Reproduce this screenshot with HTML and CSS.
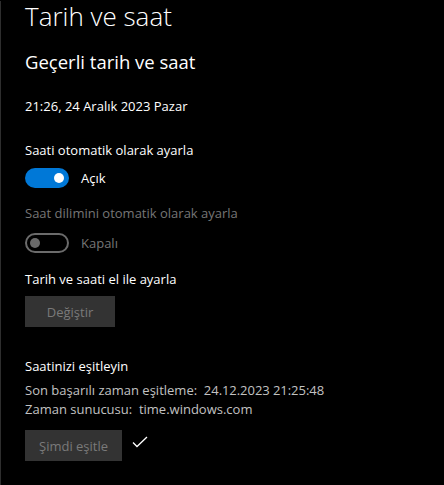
FILE: index.html
```html
<!DOCTYPE html>
<html lang="tr">
<head>
<meta charset="utf-8">
<title>Tarih ve saat</title>
<link rel="stylesheet" href="styles.css">
</head>
<body>
<div class="page">
  <h1 class="title">Tarih ve saat</h1>
  <h2 class="subtitle">Geçerli tarih ve saat</h2>
  <p class="line date">21:26, 24 Aralık 2023 Pazar</p>

  <p class="line label-auto">Saati otomatik olarak ayarla</p>
  <div class="toggle-row row-on">
    <span class="toggle on"><span class="knob"></span></span>
    <span class="toggle-label">Açık</span>
  </div>

  <p class="line disabled label-tz">Saat dilimini otomatik olarak ayarla</p>
  <div class="toggle-row row-off">
    <span class="toggle off"><span class="knob"></span></span>
    <span class="toggle-label disabled">Kapalı</span>
  </div>

  <p class="line label-manual">Tarih ve saati el ile ayarla</p>
  <div class="btn-row row-change">
    <span class="btn">Değiştir</span>
  </div>

  <p class="line label-sync">Saatinizi eşitleyin</p>
  <p class="line info info-first">Son başarılı zaman eşitleme:&nbsp; <span class="num">24.12.2023 21:25:48</span></p>
  <p class="line info">Zaman sunucusu:&nbsp; time.windows.com</p>
  <div class="btn-row row-sync">
    <span class="btn">Şimdi eşitle</span>
    <svg class="check" width="16" height="12" viewBox="0 0 16 12" aria-hidden="true">
      <path d="M1 6.5 L5 10.5 L15 1" fill="none" stroke="#ffffff" stroke-width="1.3"/>
    </svg>
  </div>
</div>
</body>
</html>
```
FILE: styles.css
```css
html, body {
  margin: 0;
  padding: 0;
  background: #000000;
  height: 100%;
  overflow: hidden;
}

.page {
  box-sizing: border-box;
  height: 100%;
  border-left: 1px solid #2e2e2e;
  padding-left: 24px;
  font-family: "Open Sans", "Noto Sans", "Liberation Sans", sans-serif;
  color: #ffffff;
  font-size: 13px;
}

.title {
  margin: 1px 0 0;
  font-size: 26px;
  line-height: 30px;
  font-weight: 300;
}

.subtitle {
  margin: 17px 0 0;
  font-size: 18.5px;
  line-height: 28px;
  font-weight: 400;
}

.line {
  margin: 0;
  line-height: 20px;
}

.date { margin-top: 20px; }
.label-auto { margin-top: 24px; }
.label-tz { margin-top: 15px; }
.label-manual { margin-top: 16px; }
.label-sync { margin-top: 29px; }

.disabled { color: #767676; }

.info {
  color: #c2c2c2;
  line-height: 19px;
}
.info-first { margin-top: 5px; }
.num { letter-spacing: -0.05px; }

.toggle-row {
  display: flex;
  align-items: center;
  gap: 12px;
  height: 20px;
}
.row-on { margin-top: 8px; }
.row-off { margin-top: 10px; }

.toggle {
  box-sizing: border-box;
  width: 44px;
  height: 20px;
  border-radius: 10px;
  display: flex;
  align-items: center;
  padding: 0 5px;
}
.toggle.on {
  background: #0078d7;
  justify-content: flex-end;
}
.toggle.off {
  border: 2px solid #6b6b6b;
  padding: 0 3px;
  justify-content: flex-start;
}
.knob {
  width: 10px;
  height: 10px;
  border-radius: 50%;
  background: #ffffff;
}
.toggle.off .knob { background: #6b6b6b; }

.toggle-label { line-height: 20px; }

.btn-row {
  display: flex;
  align-items: center;
  gap: 10px;
}
.row-change { margin-top: 7px; }
.row-sync { margin-top: 11px; }

.btn {
  box-sizing: border-box;
  height: 31px;
  min-width: 90px;
  padding: 0 14px;
  background: #333333;
  color: #7a7a7a;
  display: flex;
  align-items: center;
  justify-content: center;
  line-height: 20px;
}

.check {
  display: block;
  margin-top: -8px;
}
```
